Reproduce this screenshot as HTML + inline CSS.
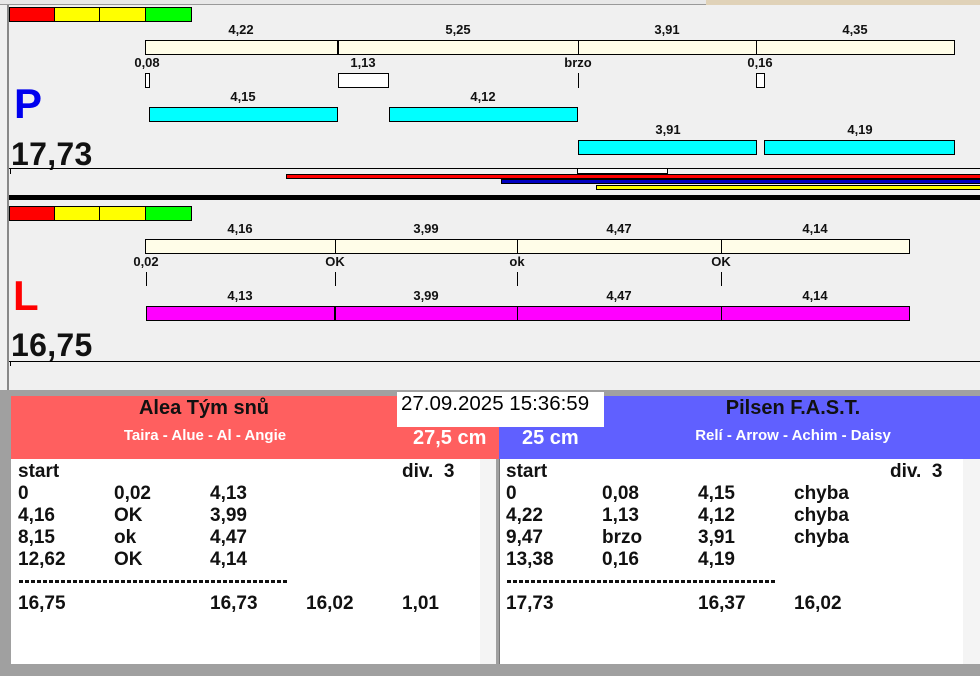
<!DOCTYPE html>
<html><head><meta charset="utf-8"><style>
*{margin:0;padding:0;box-sizing:border-box}
body{width:980px;height:676px;overflow:hidden;background:#f0f0f0;position:relative;font-family:"Liberation Sans",Arial,sans-serif}
div,span{position:absolute}
.b{border:1px solid #000}
.t{font-size:13px;font-weight:bold;color:#111;transform:translateX(-50%);white-space:nowrap;line-height:14px}
.cr{background:#fffde8}
.cy{background:#00ffff}
.mg{background:#ff00ff}
.r{font-size:19px;font-weight:bold;color:#111;line-height:22px;white-space:nowrap}
.d{font-size:17px;font-weight:bold;color:#111;line-height:22px;white-space:nowrap;letter-spacing:-0.6px}
</style></head><body>
<div style="left:0;top:0;width:980px;height:5px;background:#e8e8e8;border-bottom:1px solid #999"></div>
<div style="left:706px;top:0;width:274px;height:5px;background:#e0d2b8"></div>
<div style="left:7px;top:5px;width:2px;height:385px;background:#888"></div>

<div class="b" style="left:9px;top:7px;width:46px;height:15px;background:#f00"></div>
<div class="b" style="left:54px;top:7px;width:46px;height:15px;background:#ff0"></div>
<div class="b" style="left:99px;top:7px;width:47px;height:15px;background:#ff0"></div>
<div class="b" style="left:145px;top:7px;width:47px;height:15px;background:#0f0"></div>

<span class="t" style="left:241px;top:23px">4,22</span>
<span class="t" style="left:458px;top:23px">5,25</span>
<span class="t" style="left:667px;top:23px">3,91</span>
<span class="t" style="left:855px;top:23px">4,35</span>
<div class="b cr" style="left:145px;top:40px;width:194px;height:15px;border-right-width:2px"></div>
<div class="b cr" style="left:338px;top:40px;width:241px;height:15px"></div>
<div class="b cr" style="left:578px;top:40px;width:179px;height:15px"></div>
<div class="b cr" style="left:756px;top:40px;width:199px;height:15px"></div>

<span class="t" style="left:147px;top:56px">0,08</span>
<span class="t" style="left:363px;top:56px">1,13</span>
<span class="t" style="left:578px;top:56px">brzo</span>
<span class="t" style="left:760px;top:56px">0,16</span>
<div class="b" style="left:145px;top:73px;width:5px;height:15px;background:#fff"></div>
<div class="b" style="left:338px;top:73px;width:51px;height:15px;background:#fff"></div>
<div style="left:578px;top:73px;width:1px;height:15px;background:#000"></div>
<div class="b" style="left:756px;top:73px;width:9px;height:15px;background:#fff"></div>

<span class="t" style="left:243px;top:90px">4,15</span>
<span class="t" style="left:483px;top:90px">4,12</span>
<div class="b cy" style="left:149px;top:107px;width:189px;height:15px"></div>
<div class="b cy" style="left:389px;top:107px;width:189px;height:15px"></div>
<span class="t" style="left:668px;top:123px">3,91</span>
<span class="t" style="left:860px;top:123px">4,19</span>
<div class="b cy" style="left:578px;top:140px;width:179px;height:15px"></div>
<div class="b cy" style="left:764px;top:140px;width:191px;height:15px"></div>

<span style="left:14px;top:80px;font-size:42px;font-weight:bold;color:#0000ee">P</span>
<span style="left:11px;top:136px;font-size:32px;font-weight:bold;color:#111;letter-spacing:0.3px">17,73</span>
<div style="left:9px;top:168px;width:971px;height:1px;background:#000"></div>
<div style="left:10px;top:168px;width:1px;height:6px;background:#000"></div>
<div class="b" style="left:577px;top:168px;width:91px;height:6px;background:#fff"></div>
<div class="b" style="left:286px;top:174px;width:700px;height:5px;background:#f00"></div>
<div class="b" style="left:501px;top:179px;width:500px;height:5px;background:#0000c0"></div>
<div class="b" style="left:596px;top:185px;width:400px;height:5px;background:#ff0"></div>
<div style="left:9px;top:195px;width:971px;height:5px;background:#000"></div>

<div class="b" style="left:9px;top:206px;width:46px;height:15px;background:#f00"></div>
<div class="b" style="left:54px;top:206px;width:46px;height:15px;background:#ff0"></div>
<div class="b" style="left:99px;top:206px;width:47px;height:15px;background:#ff0"></div>
<div class="b" style="left:145px;top:206px;width:47px;height:15px;background:#0f0"></div>

<span class="t" style="left:240px;top:222px">4,16</span>
<span class="t" style="left:426px;top:222px">3,99</span>
<span class="t" style="left:619px;top:222px">4,47</span>
<span class="t" style="left:815px;top:222px">4,14</span>
<div class="b cr" style="left:145px;top:239px;width:191px;height:15px"></div>
<div class="b cr" style="left:335px;top:239px;width:183px;height:15px"></div>
<div class="b cr" style="left:517px;top:239px;width:205px;height:15px"></div>
<div class="b cr" style="left:721px;top:239px;width:189px;height:15px"></div>

<span class="t" style="left:146px;top:255px">0,02</span>
<span class="t" style="left:335px;top:255px">OK</span>
<span class="t" style="left:517px;top:255px">ok</span>
<span class="t" style="left:721px;top:255px">OK</span>
<div style="left:146px;top:272px;width:1px;height:14px;background:#000"></div>
<div style="left:335px;top:272px;width:1px;height:14px;background:#000"></div>
<div style="left:517px;top:272px;width:1px;height:14px;background:#000"></div>
<div style="left:721px;top:272px;width:1px;height:14px;background:#000"></div>

<span class="t" style="left:240px;top:289px">4,13</span>
<span class="t" style="left:426px;top:289px">3,99</span>
<span class="t" style="left:619px;top:289px">4,47</span>
<span class="t" style="left:815px;top:289px">4,14</span>
<div class="b mg" style="left:146px;top:306px;width:190px;height:15px;border-right-width:2px"></div>
<div class="b mg" style="left:335px;top:306px;width:183px;height:15px"></div>
<div class="b mg" style="left:517px;top:306px;width:205px;height:15px"></div>
<div class="b mg" style="left:721px;top:306px;width:189px;height:15px"></div>

<span style="left:13px;top:272px;font-size:42px;color:#f00;font-weight:bold">L</span>
<span style="left:11px;top:327px;font-size:32px;font-weight:bold;color:#111;letter-spacing:0.3px">16,75</span>
<div style="left:9px;top:361px;width:971px;height:1px;background:#000"></div>
<div style="left:10px;top:361px;width:1px;height:5px;background:#000"></div>

<div style="left:0;top:390px;width:980px;height:286px;background:#a0a0a0"></div>
<div style="left:11px;top:396px;width:488px;height:63px;background:#ff5f5f"></div>
<div style="left:499px;top:396px;width:481px;height:63px;background:#6060ff"></div>
<span style="left:11px;width:386px;top:397px;text-align:center;font-size:20px;font-weight:bold;color:#111">Alea Tým snů</span>
<span style="left:11px;width:388px;top:427px;text-align:center;font-size:15px;font-weight:bold;color:#fff">Taira - Alue - Al - Angie</span>
<span style="left:413px;top:427px;font-size:20px;font-weight:bold;color:#fff">27,5 cm</span>
<span style="left:522px;top:427px;font-size:20px;font-weight:bold;color:#fff">25 cm</span>
<span style="left:604px;width:378px;top:397px;text-align:center;font-size:20px;font-weight:bold;color:#111">Pilsen F.A.S.T.</span>
<span style="left:604px;width:378px;top:427px;text-align:center;font-size:15px;font-weight:bold;color:#fff">Relí - Arrow - Achim - Daisy</span>
<div style="left:397px;top:392px;width:207px;height:35px;background:#fff"></div>
<span style="left:401px;top:392px;font-size:20.5px;color:#000">27.09.2025 15:36:59</span>

<div style="left:11px;top:459px;width:487px;height:205px;background:#fff;border-right:2px solid #a0a0a0"></div>
<div style="left:480px;top:459px;width:16px;height:205px;background:#f4f4f4"></div>
<div style="left:499px;top:459px;width:481px;height:205px;background:#fff;border-left:1px solid #777"></div>
<div style="left:963px;top:459px;width:17px;height:205px;background:#f4f4f4"></div>

<span class="r" style="left:18px;top:461px">start</span>
<span class="r" style="left:402px;top:461px">div.&nbsp; 3</span>
<span class="r" style="left:18px;top:483px">0</span><span class="r" style="left:114px;top:483px">0,02</span><span class="r" style="left:210px;top:483px">4,13</span>
<span class="r" style="left:18px;top:505px">4,16</span><span class="r" style="left:114px;top:505px">OK</span><span class="r" style="left:210px;top:505px">3,99</span>
<span class="r" style="left:18px;top:527px">8,15</span><span class="r" style="left:114px;top:527px">ok</span><span class="r" style="left:210px;top:527px">4,47</span>
<span class="r" style="left:18px;top:549px">12,62</span><span class="r" style="left:114px;top:549px">OK</span><span class="r" style="left:210px;top:549px">4,14</span>
<div style="left:19px;top:580px;width:269px;height:3px;background:repeating-linear-gradient(90deg,#111 0 4px,transparent 4px 6px)"></div>
<span class="r" style="left:18px;top:593px">16,75</span><span class="r" style="left:210px;top:593px">16,73</span><span class="r" style="left:306px;top:593px">16,02</span><span class="r" style="left:402px;top:593px">1,01</span>

<span class="r" style="left:506px;top:461px">start</span>
<span class="r" style="left:890px;top:461px">div.&nbsp; 3</span>
<span class="r" style="left:506px;top:483px">0</span><span class="r" style="left:602px;top:483px">0,08</span><span class="r" style="left:698px;top:483px">4,15</span><span class="r" style="left:794px;top:483px">chyba</span>
<span class="r" style="left:506px;top:505px">4,22</span><span class="r" style="left:602px;top:505px">1,13</span><span class="r" style="left:698px;top:505px">4,12</span><span class="r" style="left:794px;top:505px">chyba</span>
<span class="r" style="left:506px;top:527px">9,47</span><span class="r" style="left:602px;top:527px">brzo</span><span class="r" style="left:698px;top:527px">3,91</span><span class="r" style="left:794px;top:527px">chyba</span>
<span class="r" style="left:506px;top:549px">13,38</span><span class="r" style="left:602px;top:549px">0,16</span><span class="r" style="left:698px;top:549px">4,19</span>
<div style="left:507px;top:580px;width:269px;height:3px;background:repeating-linear-gradient(90deg,#111 0 4px,transparent 4px 6px)"></div>
<span class="r" style="left:506px;top:593px">17,73</span><span class="r" style="left:698px;top:593px">16,37</span><span class="r" style="left:794px;top:593px">16,02</span>
</body></html>
